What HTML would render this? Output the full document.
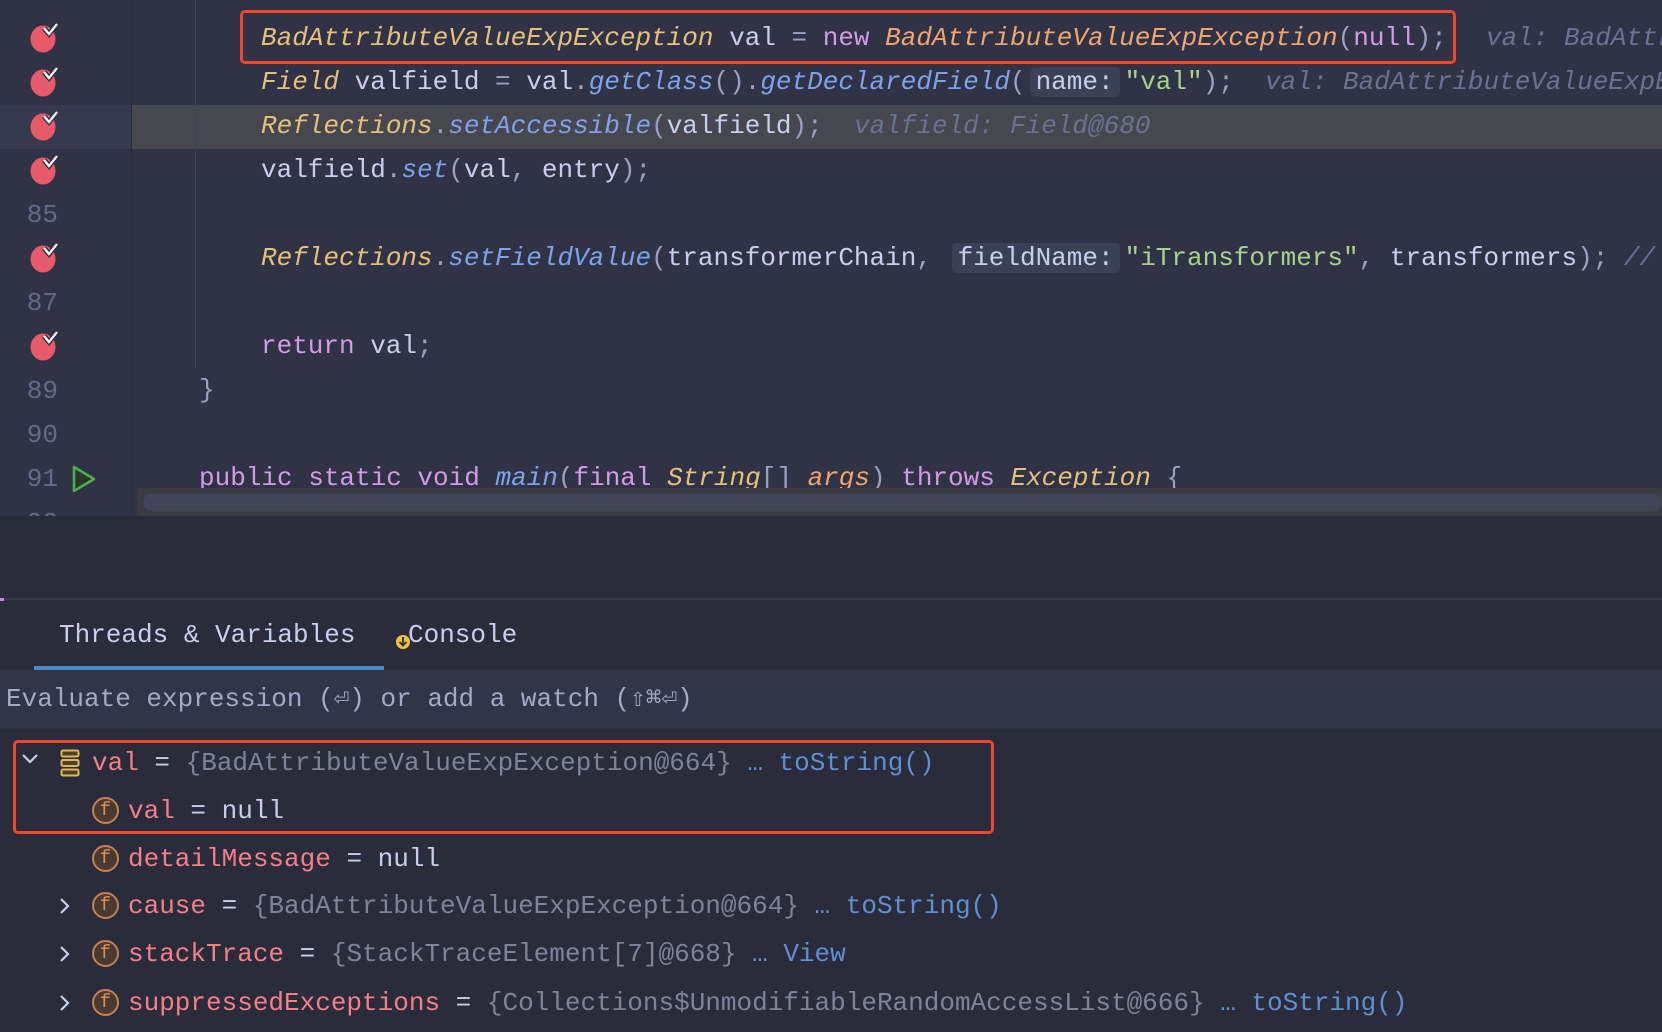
<!DOCTYPE html>
<html><head><meta charset="utf-8">
<style>
*{margin:0;padding:0;box-sizing:border-box}
body{width:1662px;height:1032px;overflow:hidden;background:#2a2c3b;font-family:"Liberation Mono",monospace;font-size:26px;color:#c8cfeb;position:relative}
.ed{position:absolute;left:0;top:0;width:1662px;height:516px;background:#303346;overflow:hidden}
.hl{position:absolute;left:131px;top:105px;width:1531px;height:44px;background:#47474f}
.ghl{position:absolute;left:0;top:105px;width:131px;height:44px;background:#363a4e}
.gb{position:absolute;left:131px;top:0;width:1px;height:516px;background:#2a2d3c}
.guide{position:absolute;left:195px;top:0;width:1px;height:368px;background:#40445a}
.ln{position:absolute;left:0;width:58px;text-align:right;color:#646a85;height:44px;line-height:44px}
.bp{position:absolute;left:29px;width:30px;height:30px}
.l{position:absolute;white-space:pre;height:44px;line-height:44px}
.c{color:#e5c07b;font-style:italic}
.o{color:#f0a46e;font-style:italic}
.k{color:#d49ae6}
.m{color:#7ea2ea;font-style:italic}
.s{color:#a8d18b}
.g{color:#6b7190;font-style:italic}
.p{color:#9aa0bd}
.hint{background:#3c4054;border-radius:5px;padding:0 6px;margin:0 5px 0 4px;color:#c8cfeb;font-style:normal}
.box{position:absolute;border:3px solid #f0472b;border-radius:5px}
.v{position:absolute;white-space:pre;height:46px;line-height:46px}
.vn{color:#f47f86}
.gr{color:#7f8399}
.lk{color:#5f8fd0}
.fi{position:absolute;width:27px;height:27px;border:2px solid #c8804e;border-radius:50%;background:#4a3a32;color:#d9905a;font-size:19px;line-height:23px;text-align:center}
.arr{position:absolute}
</style></head><body>
<div class="ed">
 <div class="hl"></div><div class="ghl"></div>
 <div class="gb"></div><div class="guide"></div>
 <svg class="bp" style="top:23px" viewBox="0 0 30 30"><ellipse cx="14" cy="16" rx="12.5" ry="13.5" fill="#e85a6a"/><path d="M15 5l5 6 8-10" stroke="#303346" stroke-width="5" fill="none"/><path d="M15 5l5 6 8-10" stroke="#fff" stroke-width="2.2" fill="none"/></svg>
 <svg class="bp" style="top:67px" viewBox="0 0 30 30"><ellipse cx="14" cy="16" rx="12.5" ry="13.5" fill="#e85a6a"/><path d="M15 5l5 6 8-10" stroke="#303346" stroke-width="5" fill="none"/><path d="M15 5l5 6 8-10" stroke="#fff" stroke-width="2.2" fill="none"/></svg>
 <svg class="bp" style="top:111px" viewBox="0 0 30 30"><ellipse cx="14" cy="16" rx="12.5" ry="13.5" fill="#e85a6a"/><path d="M15 5l5 6 8-10" stroke="#363a4e" stroke-width="5" fill="none"/><path d="M15 5l5 6 8-10" stroke="#fff" stroke-width="2.2" fill="none"/></svg>
 <svg class="bp" style="top:155px" viewBox="0 0 30 30"><ellipse cx="14" cy="16" rx="12.5" ry="13.5" fill="#e85a6a"/><path d="M15 5l5 6 8-10" stroke="#303346" stroke-width="5" fill="none"/><path d="M15 5l5 6 8-10" stroke="#fff" stroke-width="2.2" fill="none"/></svg>
 <div class="ln" style="top:193px">85</div>
 <svg class="bp" style="top:243px" viewBox="0 0 30 30"><ellipse cx="14" cy="16" rx="12.5" ry="13.5" fill="#e85a6a"/><path d="M15 5l5 6 8-10" stroke="#303346" stroke-width="5" fill="none"/><path d="M15 5l5 6 8-10" stroke="#fff" stroke-width="2.2" fill="none"/></svg>
 <div class="ln" style="top:281px">87</div>
 <svg class="bp" style="top:331px" viewBox="0 0 30 30"><ellipse cx="14" cy="16" rx="12.5" ry="13.5" fill="#e85a6a"/><path d="M15 5l5 6 8-10" stroke="#303346" stroke-width="5" fill="none"/><path d="M15 5l5 6 8-10" stroke="#fff" stroke-width="2.2" fill="none"/></svg>
 <div class="ln" style="top:369px">89</div>
 <div class="ln" style="top:413px">90</div>
 <div class="ln" style="top:457px">91</div>
 <div class="ln" style="top:501px">92</div>
 <svg style="position:absolute;left:71px;top:465px" width="26" height="28" viewBox="0 0 26 28"><path d="M3 2L23 14L3 26Z" fill="#26392a" stroke="#4caf50" stroke-width="2.5" stroke-linejoin="round"/></svg>

 <div class="l" style="left:261px;top:16px"><span class="c">BadAttributeValueExpException</span> val <span class="p">=</span> <span class="k">new</span> <span class="o">BadAttributeValueExpException</span><span class="p">(</span><span class="k">null</span><span class="p">);</span></div>
 <div class="l g" style="left:1486px;top:16px">val: BadAttributeValueExpException@664</div>
 <div class="l" style="left:261px;top:60px"><span class="c">Field</span> valfield <span class="p">=</span> val<span class="p">.</span><span class="m">getClass</span><span class="p">().</span><span class="m">getDeclaredField</span><span class="p">(</span><span class="hint">name:</span><span class="s">"val"</span><span class="p">);</span>  <span class="g">val: BadAttributeValueExpException@664</span></div>
 <div class="l" style="left:261px;top:104px"><span class="c">Reflections</span><span class="p">.</span><span class="m">setAccessible</span><span class="p">(</span>valfield<span class="p">);</span>  <span class="g">valfield: Field@680</span></div>
 <div class="l" style="left:261px;top:148px">valfield<span class="p">.</span><span class="m">set</span><span class="p">(</span>val<span class="p">,</span> entry<span class="p">);</span></div>
 <div class="l" style="left:261px;top:236px"><span class="c">Reflections</span><span class="p">.</span><span class="m">setFieldValue</span><span class="p">(</span>transformerChain<span class="p">,</span> <span class="hint">fieldName:</span><span class="s">"iTransformers"</span><span class="p">,</span> transformers<span class="p">);</span> <span class="g">// needed</span></div>
 <div class="l" style="left:261px;top:324px"><span class="k">return</span> val<span class="p">;</span></div>
 <div class="l p" style="left:199px;top:368px">}</div>
 <div class="l" style="left:199px;top:456px"><span class="k">public static void</span> <span class="m">main</span><span class="p">(</span><span class="k">final</span> <span class="c">String</span><span class="p">[]</span> <span class="o">args</span><span class="p">)</span> <span class="k">throws</span> <span class="c">Exception</span> <span class="p">{</span></div>
 <div style="position:absolute;left:137px;top:488px;width:1525px;height:28px;background:#3b3c43"></div>
 <div style="position:absolute;left:143px;top:494px;width:1519px;height:17px;background:#414559;border-radius:9px"></div>
 <div class="box" style="left:240px;top:10px;width:1216px;height:54px"></div>
</div>

<div style="position:absolute;left:0;top:598px;width:1662px;height:2px;background:#363949"></div>
<div style="position:absolute;left:0;top:598px;width:4px;height:3px;background:#c58be0"></div>
<div style="position:absolute;left:59px;top:617px;line-height:36px;white-space:pre">Threads &amp; Variables</div>
<svg style="position:absolute;left:395px;top:634px" width="16" height="16" viewBox="0 0 16 16"><circle cx="8" cy="8" r="7" fill="#f0c040"/><path d="M8 3v8M4.5 8L8 11.5L11.5 8" stroke="#2a2c3b" stroke-width="1.8" fill="none"/></svg>
<div style="position:absolute;left:408px;top:617px;line-height:36px">Console</div>
<div style="position:absolute;left:34px;top:666px;width:350px;height:4px;background:#4a88c7"></div>
<div style="position:absolute;left:0;top:670px;width:1662px;height:59px;background:#323548"></div>
<div style="position:absolute;left:6px;top:680px;line-height:38px;color:#a4aac4;white-space:pre">Evaluate expression (⏎) or add a watch (⇧⌘⏎)</div>

<svg class="arr" style="left:20px;top:752px" width="20" height="14" viewBox="0 0 20 14"><path d="M3 3l7 7 7-7" stroke="#c8cfeb" stroke-width="2.2" fill="none"/></svg>
<svg style="position:absolute;left:60px;top:749px" width="20" height="28" viewBox="0 0 20 28"><rect x="1.5" y="1.5" width="17" height="6" rx="1.5" fill="#4a3f30" stroke="#e0b84a" stroke-width="2"/><rect x="1.5" y="11" width="17" height="6" rx="1.5" fill="#4a3f30" stroke="#e0b84a" stroke-width="2"/><rect x="1.5" y="20.5" width="17" height="6" rx="1.5" fill="#4a3f30" stroke="#e0b84a" stroke-width="2"/></svg>
<div class="v" style="left:92px;top:740px"><span class="vn">val</span> = <span class="gr">{BadAttributeValueExpException@664}</span> <span class="lk">… toString()</span></div>

<div class="fi" style="left:92px;top:797px">f</div>
<div class="v" style="left:128px;top:788px"><span class="vn">val</span> = null</div>

<div class="fi" style="left:92px;top:845px">f</div>
<div class="v" style="left:128px;top:836px"><span class="vn">detailMessage</span> = null</div>

<svg class="arr" style="left:58px;top:896px" width="14" height="20" viewBox="0 0 14 20"><path d="M3 3l7 7-7 7" stroke="#c8cfeb" stroke-width="2.2" fill="none"/></svg>
<div class="fi" style="left:92px;top:892px">f</div>
<div class="v" style="left:128px;top:883px"><span class="vn">cause</span> = <span class="gr">{BadAttributeValueExpException@664}</span> <span class="lk">… toString()</span></div>

<svg class="arr" style="left:58px;top:944px" width="14" height="20" viewBox="0 0 14 20"><path d="M3 3l7 7-7 7" stroke="#c8cfeb" stroke-width="2.2" fill="none"/></svg>
<div class="fi" style="left:92px;top:940px">f</div>
<div class="v" style="left:128px;top:931px"><span class="vn">stackTrace</span> = <span class="gr">{StackTraceElement[7]@668}</span> <span class="lk">… View</span></div>

<svg class="arr" style="left:58px;top:993px" width="14" height="20" viewBox="0 0 14 20"><path d="M3 3l7 7-7 7" stroke="#c8cfeb" stroke-width="2.2" fill="none"/></svg>
<div class="fi" style="left:92px;top:989px">f</div>
<div class="v" style="left:128px;top:980px"><span class="vn">suppressedExceptions</span> = <span class="gr">{Collections$UnmodifiableRandomAccessList@666}</span> <span class="lk">… toString()</span></div>

<div class="box" style="left:13px;top:740px;width:981px;height:94px"></div>
</body></html>
